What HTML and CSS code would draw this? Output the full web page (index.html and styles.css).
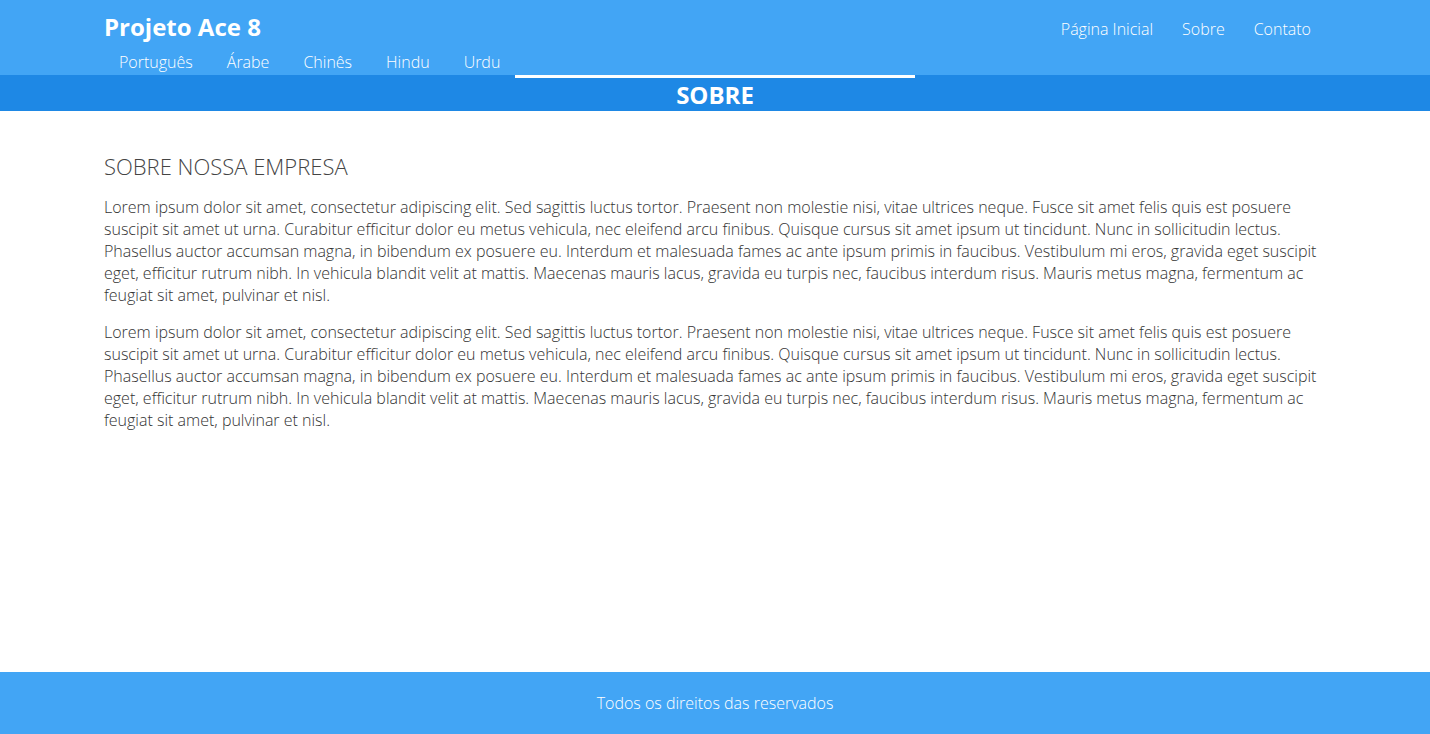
FILE: index.html
```html
<!DOCTYPE html>
<html lang="pt">
<head>
<meta charset="utf-8">
<title>Projeto Ace 8</title>
<link rel="stylesheet" href="styles.css">
</head>
<body>
<div class="page">
  <header class="topbar">
    <div class="container topbar-row">
      <a class="brand" href="#">Projeto Ace 8</a>
      <nav class="main-nav">
        <a href="#">Página Inicial</a>
        <a href="#">Sobre</a>
        <a href="#">Contato</a>
      </nav>
    </div>
    <div class="container">
      <nav class="lang-nav">
        <a href="#">Português</a>
        <a href="#">Árabe</a>
        <a href="#">Chinês</a>
        <a href="#">Hindu</a>
        <a href="#">Urdu</a>
      </nav>
    </div>
  </header>
  <div class="pagebar">
    <h1 class="pagebar-title">SOBRE</h1>
  </div>
  <main class="content container">
    <h2 class="section-title">SOBRE NOSSA EMPRESA</h2>
    <p>Lorem ipsum dolor sit amet, consectetur adipiscing elit. Sed sagittis luctus tortor. Praesent non molestie nisi, vitae ultrices neque. Fusce sit amet felis quis est posuere suscipit sit amet ut urna. Curabitur efficitur dolor eu metus vehicula, nec eleifend arcu finibus. Quisque cursus sit amet ipsum ut tincidunt. Nunc in sollicitudin lectus. Phasellus auctor accumsan magna, in bibendum ex posuere eu. Interdum et malesuada fames ac ante ipsum primis in faucibus. Vestibulum mi eros, gravida eget suscipit eget, efficitur rutrum nibh. In vehicula blandit velit at mattis. Maecenas mauris lacus, gravida eu turpis nec, faucibus interdum risus. Mauris metus magna, fermentum ac feugiat sit amet, pulvinar et nisl.</p>
    <p>Lorem ipsum dolor sit amet, consectetur adipiscing elit. Sed sagittis luctus tortor. Praesent non molestie nisi, vitae ultrices neque. Fusce sit amet felis quis est posuere suscipit sit amet ut urna. Curabitur efficitur dolor eu metus vehicula, nec eleifend arcu finibus. Quisque cursus sit amet ipsum ut tincidunt. Nunc in sollicitudin lectus. Phasellus auctor accumsan magna, in bibendum ex posuere eu. Interdum et malesuada fames ac ante ipsum primis in faucibus. Vestibulum mi eros, gravida eget suscipit eget, efficitur rutrum nibh. In vehicula blandit velit at mattis. Maecenas mauris lacus, gravida eu turpis nec, faucibus interdum risus. Mauris metus magna, fermentum ac feugiat sit amet, pulvinar et nisl.</p>
  </main>
  <footer class="footer">Todos os direitos das reservados</footer>
</div>
</body>
</html>
```

FILE: styles.css
```css
* { box-sizing: border-box; }

html, body {
  margin: 0;
  padding: 0;
}

body {
  font-family: "Open Sans", "Liberation Sans", sans-serif;
  font-weight: 300;
  font-size: 16px;
  line-height: 22px;
  color: #333;
  background: #fff;
}

.page {
  min-height: 100vh;
  display: flex;
  flex-direction: column;
}

.container {
  width: 1222px;
  margin: 0 auto;
}

.topbar {
  background: #42a5f5;
  height: 75px;
}

.topbar a {
  color: #fff;
  text-decoration: none;
}

.topbar-row {
  display: flex;
  justify-content: space-between;
  align-items: center;
  height: 54px;
  padding-top: 4px;
}

.brand {
  font-size: 24px;
  font-weight: 700;
  line-height: 30px;
  margin-top: -4px;
}

.main-nav {
  display: flex;
  gap: 29px;
  padding-right: 15px;
  font-size: 16px;
}

.lang-nav {
  display: flex;
  gap: 34px;
  padding-left: 15px;
  font-size: 16px;
  line-height: 21px;
  margin-top: -2px;
}

.pagebar {
  background: #1e88e5;
  height: 36px;
  display: flex;
  justify-content: center;
}

.pagebar-title {
  margin: 0;
  width: 400px;
  border-top: 3px solid #fff;
  padding-top: 1px;
  text-align: center;
  color: #fff;
  font-size: 24px;
  font-weight: 700;
  line-height: 32px;
}

.content {
  flex: 1;
  padding-top: 40px;
}

.section-title {
  margin: 0 0 15px;
  font-size: 22px;
  font-weight: 300;
  line-height: 30px;
  color: #444;
}

.content p {
  margin: 0 0 15px;
}

.footer {
  background: #42a5f5;
  height: 62px;
  display: flex;
  align-items: center;
  justify-content: center;
  color: #fff;
  font-size: 16px;
}
```
